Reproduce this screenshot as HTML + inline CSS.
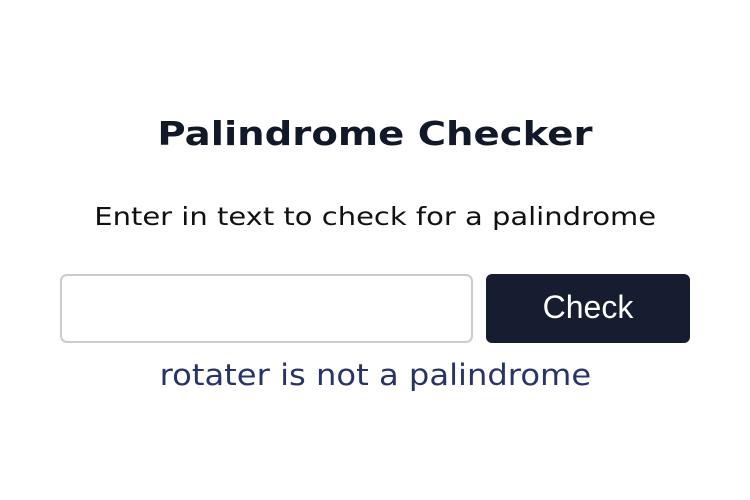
<!DOCTYPE html>
<html><head><meta charset="utf-8"><style>
html,body{margin:0;padding:0;width:750px;height:500px;background:#fff;overflow:hidden}
.t{position:absolute;left:0;width:750px;text-align:center;font-family:"DejaVu Sans",sans-serif;white-space:nowrap}
.t span{display:inline-block}
#h{top:112px;font-size:33px;font-weight:bold;color:#111827;line-height:44px}
#h span{transform:scaleX(1.17)}
#s{top:200px;font-size:25px;color:#111;line-height:34px}
#s span{transform:scaleX(1.16)}
#r{top:356px;font-size:29px;color:#283469;line-height:38px}
#r span{transform:scaleX(1.11)}
#in{position:absolute;left:60px;top:274px;width:409px;height:65px;border:2px solid #ccc;border-radius:7px;background:#fff}
#b{position:absolute;left:486px;top:274px;width:204px;height:69px;background:#161d31;border-radius:6px;color:#fff;font-family:"Liberation Sans",Arial,sans-serif;font-size:32px;line-height:66px;text-align:center}
</style></head><body>
<div class="t" id="h"><span>Palindrome Checker</span></div>
<div class="t" id="s"><span>Enter in text to check for a palindrome</span></div>
<div id="in"></div>
<div id="b">Check</div>
<div class="t" id="r"><span>rotater is not a palindrome</span></div>
</body></html>
